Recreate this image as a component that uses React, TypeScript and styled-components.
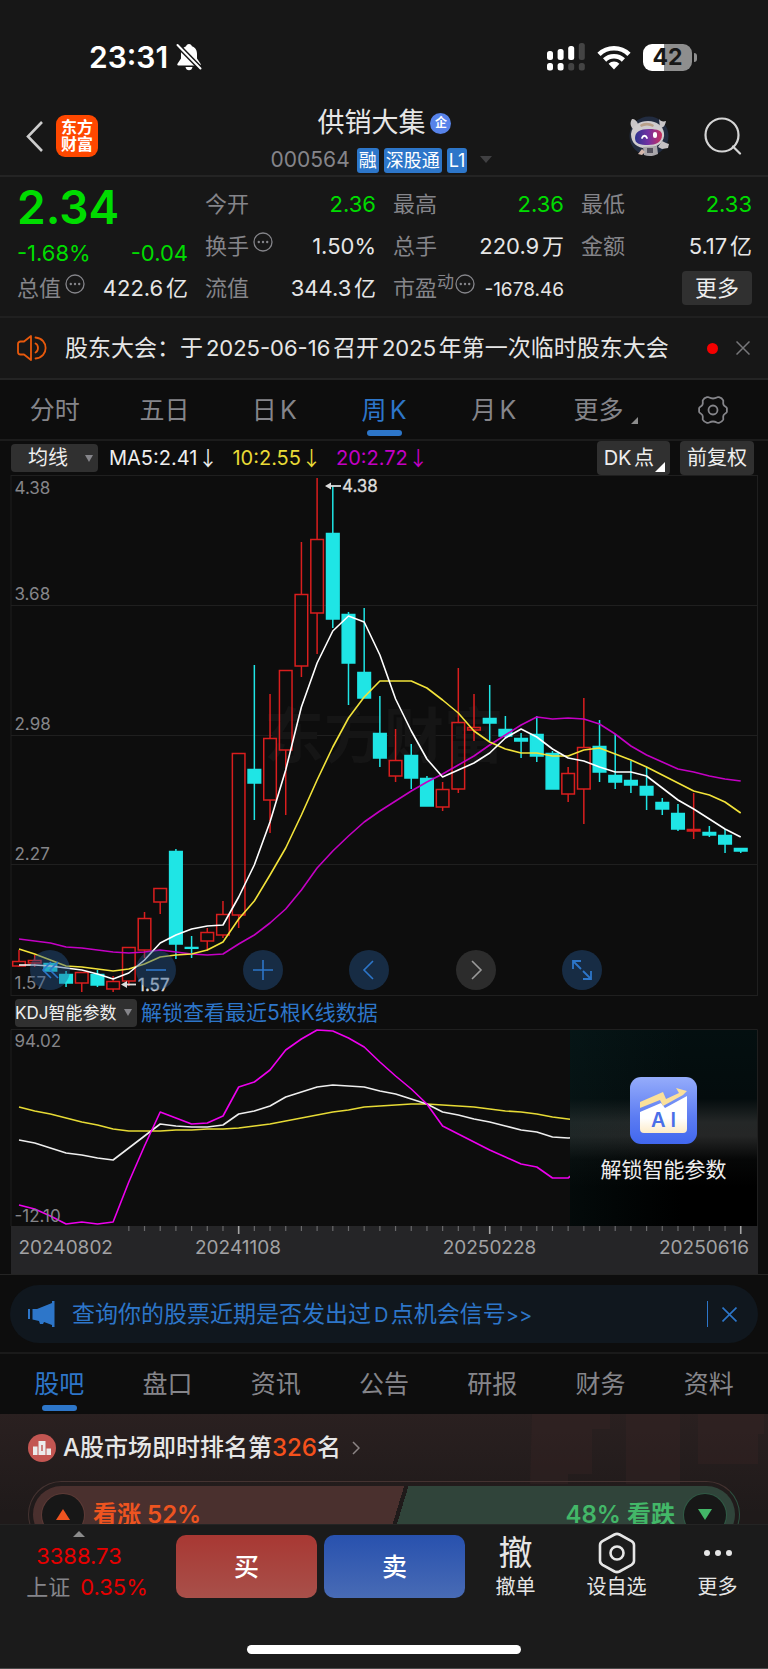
import React from "react";
import styled, { createGlobalStyle, css } from "styled-components";

const GlobalStyle = createGlobalStyle`
  * { box-sizing: border-box; }
  body { margin: 0; background: #0d0d0d; }
  body, button, select { font-family: Inter, "Noto Sans CJK SC", sans-serif; }
  button, select { appearance: none; border: 0; padding: 0; margin: 0; background: none; color: inherit; }
  button { cursor: pointer; }
  a { color: inherit; text-decoration: none; }
  svg { display: block; flex: none; }
`;

const BLUE = "#2d76c9";
const GREEN = "#00dc00";
const GREY = "#85858a";
const UP = "#d91e1e";
const DOWN = "#1fe5e5";
const MAGENTA = "#c400c4";
const YELLOW = "#f2e33a";

/* ---------- shell ---------- */

const Page = styled.div`
  width: 100%;
  overflow: hidden;
  color: #e6e6e6;
  text-autospace: normal;
`;

const StatusBar = styled.div`
  display: flex;
  align-items: center;
  justify-content: space-between;
  height: 95px;
  padding: 19px 71px 0 89px;
  background: #171717;
`;
const StatusGroup = styled.div<{ $gap: number }>`
  display: flex;
  align-items: center;
  gap: ${(p) => p.$gap}px;
`;
const Clock = styled.span`
  font-size: 30px;
  font-weight: 600;
  line-height: 32px;
  color: #fff;
`;

const Header = styled.header`
  display: grid;
  grid-template-columns: 1fr auto 1fr;
  align-items: center;
  height: 82px;
  padding: 2px 25px 0 26px;
  background: #171717;
  border-bottom: 2px solid #242424;
`;
const HeaderSide = styled.div<{ $end?: boolean }>`
  display: flex;
  align-items: center;
  gap: ${(p) => (p.$end ? 34 : 13)}px;
  justify-content: ${(p) => (p.$end ? "flex-end" : "flex-start")};
`;
const IconButton = styled.button`
  display: flex;
  align-items: center;
  justify-content: center;
`;
const Logo = styled.div`
  display: grid;
  place-content: center;
  width: 42px;
  height: 42px;
  border-radius: 9px;
  background: #ff4800;
  color: #fff;
  font-size: 16px;
  font-weight: 700;
  line-height: 17px;
  text-align: center;
`;
const TitleBlock = styled.div`
  display: flex;
  flex-direction: column;
  align-items: center;
  gap: 7px;
  padding-top: 9px;
`;
const TitleRow = styled.div`
  display: flex;
  align-items: center;
  gap: 5px;
  height: 32px;
`;
const Title = styled.h1`
  margin: 0;
  font-size: 27px;
  font-weight: 400;
  line-height: 32px;
`;
const CompanyBadge = styled.span`
  display: grid;
  place-content: center;
  width: 21px;
  height: 21px;
  border-radius: 50%;
  background: #5783ea;
  color: #fff;
  font-size: 12px;
  font-weight: 700;
  line-height: 14px;
`;
const CodeRow = styled.div`
  display: flex;
  align-items: center;
  gap: 5px;
  height: 28px;
`;
const Code = styled.span`
  margin-right: 2px;
  color: ${GREY};
  font-size: 21px;
  line-height: 24px;
`;
const Tag = styled.span`
  padding: 0 2px;
  border-radius: 3px;
  background: ${BLUE};
  color: #fff;
  font-size: 18px;
  line-height: 25px;
`;

/* ---------- quote ---------- */

const Quote = styled.section`
  display: grid;
  grid-template-columns: repeat(4, 1fr);
  column-gap: 17px;
  padding: 6px 16px 7px 17px;
  background: #171717;
  border-bottom: 2px solid #202020;
`;
const QuoteColumn = styled.div`
  display: flex;
  flex-direction: column;
`;
const QuoteRow = styled.div`
  display: flex;
  align-items: center;
  justify-content: space-between;
  height: 42px;
`;
const PriceRow = styled(QuoteRow)`
  height: 48px;
`;
const ChangeRow = styled(QuoteRow)`
  height: 36px;
  padding-top: 8px;
`;
const Price = styled.span`
  color: ${GREEN};
  font-size: 46px;
  font-weight: 600;
  line-height: 48px;
`;
const QuoteLabel = styled.span<{ $gap?: number }>`
  display: flex;
  align-items: center;
  gap: ${(p) => p.$gap ?? 4}px;
  color: ${GREY};
  font-size: 22px;
  line-height: 28px;
  white-space: nowrap;
`;
const Raised = styled.span`
  display: flex;
  align-items: center;
  gap: 1px;
  padding-bottom: 8px;
`;
const Superscript = styled.span`
  padding-bottom: 4px;
  font-size: 17px;
  line-height: 20px;
`;
const Value = styled.span<{ $green?: boolean }>`
  color: ${(p) => (p.$green ? GREEN : "#e6e6e6")};
  font-size: 22px;
  line-height: 28px;
  white-space: nowrap;
`;
const SmallValue = styled(Value)`
  padding-top: 4px;
  font-size: 19px;
`;
const MoreButton = styled.button`
  margin-left: auto;
  padding: 0 13px;
  border-radius: 4px;
  background: #303030;
  color: #eee;
  font-size: 22px;
  line-height: 34px;
`;

const Notice = styled.section`
  display: flex;
  align-items: center;
  height: 62px;
  padding: 0 18px 0 17px;
  background: #171717;
  border-bottom: 2px solid #242424;
`;
const NoticeText = styled.a`
  flex: 1;
  margin-left: 18px;
  font-size: 23px;
  line-height: 30px;
  white-space: nowrap;
`;
const Latin = styled.span<{ $size: number }>`
  font-size: ${(p) => p.$size}px;
`;
const RedDot = styled.span`
  width: 11px;
  height: 11px;
  margin-right: 18px;
  border-radius: 50%;
  background: #f50000;
`;

/* ---------- tabs ---------- */

const Tabs = styled.nav`
  display: flex;
  height: 61px;
  border-bottom: 2px solid #1c1c1c;
`;
const SectionTabs = styled(Tabs)`
  height: 60px;
  padding: 0 5px;
  border-bottom: 0;
`;
const Tab = styled.button<{ $active?: boolean }>`
  position: relative;
  display: flex;
  flex: 1;
  align-items: center;
  justify-content: center;
  gap: 8px;
  color: ${(p) => (p.$active ? BLUE : GREY)};
  font-size: 25px;
  line-height: 30px;
  text-autospace: normal;
  ${(p) =>
    p.$active &&
    css`
      &::after {
        content: "";
        position: absolute;
        bottom: 3px;
        left: 50%;
        width: 35px;
        height: 6px;
        margin-left: -17px;
        border-radius: 3px;
        background: ${BLUE};
      }
    `}
`;
const Corner = styled.span<{ $size: number; $color: string }>`
  align-self: flex-end;
  border-left: ${(p) => p.$size}px solid transparent;
  border-bottom: ${(p) => p.$size}px solid ${(p) => p.$color};
`;
const TabCorner = styled(Corner)`
  margin: 0 -5px 15px 0;
`;

/* ---------- indicator rows ---------- */

const IndicatorBar = styled.div`
  display: flex;
  align-items: center;
  height: 34px;
  padding: 0 14px 0 11px;
`;
const SelectBox = styled.label<{ $width: number }>`
  display: flex;
  align-items: center;
  width: ${(p) => p.$width}px;
  height: 28px;
  padding-right: 5px;
  border-radius: 4px;
  background: #303030;
`;
const Select = styled.select<{ $size: number; $align: string }>`
  flex: 1;
  min-width: 0;
  height: 28px;
  color: #eee;
  font-size: ${(p) => p.$size}px;
  text-align: ${(p) => p.$align};
  text-align-last: ${(p) => p.$align};
  outline: none;
`;
const Caret = styled.span`
  border: 4px solid transparent;
  border-top: 7px solid ${GREY};
  border-bottom: 0;
`;
const Average = styled.span<{ $color: string }>`
  display: flex;
  align-items: center;
  gap: 6px;
  margin-right: 20px;
  color: ${(p) => p.$color};
  font-size: 20px;
  line-height: 26px;
  white-space: nowrap;
  ${SelectBox} + & {
    margin-left: 11px;
  }
`;
const Arrow = styled.span`
  display: flex;
  justify-content: center;
  width: 9px;
  font-family: "Noto Sans CJK SC", sans-serif;
`;
const ChartButton = styled.button`
  display: flex;
  align-items: center;
  justify-content: center;
  height: 34px;
  margin-left: 10px;
  padding: 0 7px;
  border-radius: 4px;
  background: #303030;
  color: #eee;
  font-size: 20px;
  line-height: 34px;
  text-autospace: normal;
`;
const ButtonCorner = styled(Corner)`
  margin: 0 -2px 3px 1px;
`;
const Spacer = styled.span`
  flex: 1;
`;

const KdjBar = styled.div`
  display: flex;
  align-items: center;
  gap: 4px;
  height: 33px;
  padding: 0 15px;
`;
const UnlockLink = styled.a`
  color: ${BLUE};
  font-size: 21px;
  line-height: 28px;
  text-autospace: no-autospace;
`;

/* ---------- charts ---------- */

const ChartBox = styled.div`
  position: relative;
  margin: 0 10px;
`;
const Chart = styled.svg`
  width: 100%;
  height: auto;
  font-family: Inter, "Noto Sans CJK SC", sans-serif;
`;
const ChartControls = styled.div`
  position: absolute;
  bottom: 6px;
  left: 20px;
  display: flex;
  justify-content: space-between;
  width: 76.5%;
`;
const RoundButton = styled.button<{ $muted?: boolean }>`
  display: grid;
  place-content: center;
  width: 40px;
  height: 40px;
  border-radius: 50%;
  background: ${(p) => (p.$muted ? "rgba(255,255,255,.13)" : "rgba(38,88,146,.42)")};
`;
const LockPanel = styled.a`
  position: absolute;
  top: 1px;
  right: 1px;
  bottom: 0;
  display: flex;
  flex-direction: column;
  align-items: center;
  width: 25%;
  padding-top: 47px;
  gap: 11px;
  color: #eee;
  font-size: 21px;
  line-height: 30px;
  background:
    linear-gradient(90deg, rgba(13, 40, 40, .25), rgba(0, 0, 0, 0) 60%),
    linear-gradient(#040f10, #040c0d 35%, #242727 47%, #252626 54%, #060707 66%, #000 80%);
`;

/* ---------- banner ---------- */

const BannerWrap = styled.section`
  padding: 10px 10px 9px;
  border-top: 1px solid #242424;
  border-bottom: 2px solid #1a1a1a;
`;
const Banner = styled.div`
  display: flex;
  align-items: center;
  height: 58px;
  padding: 0 21px 0 18px;
  border-radius: 29px;
  background: #10171e;
  color: ${BLUE};
`;
const BannerText = styled.a`
  flex: 1;
  margin-left: 17px;
  font-size: 23px;
  line-height: 30px;
`;
const Divider = styled.span`
  width: 1px;
  height: 26px;
  margin-right: 14px;
  background: ${BLUE};
`;

/* ---------- rank card ---------- */

const RankCard = styled.section`
  position: relative;
  height: 110px;
  padding: 14px 28px 0;
  overflow: hidden;
  background: linear-gradient(#2a2020, #1f1a1a 90%);
`;
const RankArt = styled.svg`
  position: absolute;
  top: 0;
  right: 0;
`;
const RankLine = styled.a`
  position: relative;
  display: flex;
  align-items: center;
  height: 40px;
  font-size: 24px;
  font-weight: 500;
  line-height: 32px;
`;
const RankText = styled.span`
  margin: 0 11px 0 7px;
  text-autospace: no-autospace;
`;
const Orange = styled.span`
  color: #f4511c;
`;
const Poll = styled.div`
  position: relative;
  margin-top: 13px;
  height: 67px;
  padding: 4px;
  border: 1px solid #453331;
  border-right-color: #2d5241;
  border-radius: 34px;
`;
const PollBar = styled.div`
  display: flex;
  justify-content: space-between;
  height: 57px;
  border-radius: 29px;
  overflow: hidden;
  background: linear-gradient(107deg, #4a302e 51.6%, #1f1a1a 51.6%, #1f1a1a 52.2%, #30443a 52.2%);
`;
const PollSide = styled.button<{ $color: string }>`
  display: flex;
  align-items: center;
  gap: 9px;
  padding: 0 9px;
  color: ${(p) => p.$color};
  font-size: 24px;
  font-weight: 600;
  line-height: 30px;
`;
const PollDisc = styled.span<{ $ring: string }>`
  display: grid;
  place-content: center;
  width: 42px;
  height: 42px;
  border-radius: 50%;
  background: #171717;
  box-shadow: 0 0 0 1px ${(p) => p.$ring};
`;

/* ---------- bottom bar ---------- */

const BottomBar = styled.footer`
  background: #1b1b1b;
  border-top: 1px solid #242424;
  border-bottom: 1px solid #4a4a4a;
`;
const Actions = styled.div`
  display: flex;
  align-items: flex-start;
  height: 120px;
  padding-top: 10px;
`;
const IndexBox = styled.a`
  display: flex;
  flex-direction: column;
  align-items: center;
  width: 158px;
  margin: -4px 10px 0 8px;
  color: #e60000;
  font-size: 22px;
  line-height: 31px;
`;
const IndexPrice = styled.span`
  display: flex;
  flex-direction: column;
  align-items: center;
  margin-right: 16px;
`;
const IndexRow = styled.span`
  display: flex;
  gap: 10px;
`;
const Muted = styled.span`
  color: ${GREY};
`;
const UpCaret = styled.span`
  margin-bottom: 4px;
  border: 6px solid transparent;
  border-bottom: 6px solid #8c8c8c;
  border-top: 0;
`;
const TradeButton = styled.button<{ $from: string; $to: string }>`
  flex: 1;
  height: 63px;
  border-radius: 10px;
  background: linear-gradient(${(p) => p.$from}, ${(p) => p.$to});
  color: #fff;
  font-size: 25px;
  font-weight: 500;
  line-height: 32px;
  & + & {
    margin-left: 7px;
  }
`;
const ToolButton = styled.button`
  display: flex;
  flex-direction: column;
  align-items: center;
  width: 101px;
  font-size: 20px;
  line-height: 28px;
  color: #e6e6e6;
`;
const ToolGlyph = styled.span`
  display: flex;
  align-items: center;
  height: 36px;
  margin-bottom: 2px;
  font-size: 34px;
  line-height: 36px;
`;
const HomeIndicator = styled.div`
  width: 274px;
  height: 9px;
  margin: 0 auto 14px;
  border-radius: 5px;
  background: #fff;
`;

/* ---------- data ---------- */

/* Horizontal position of the week at an index. */
const weekX = (i: number) => 19 + i * 15.69;

/* [rising, body top, body bottom, high, low] */
type Candle = [boolean, number, number, number, number];
const candles: Candle[] = [
  [true, 961, 966, 950, 967], [true, 960, 963, 955, 967], [false, 963, 971, 963, 972],
  [false, 974, 983, 971, 987], [true, 972, 983, 972, 992], [false, 974, 985, 970, 987],
  [true, 981, 989, 976, 992], [true, 947, 981, 947, 986], [true, 918, 950, 912, 958],
  [true, 888, 902, 888, 914], [false, 851, 944, 849, 959], [false, 947, 948, 936, 958],
  [true, 932, 941, 928, 951], [true, 914, 935, 901, 938], [true, 753, 915, 753, 928],
  [false, 769, 783, 665, 820], [true, 738, 800, 694, 833], [true, 670, 750, 670, 815],
  [true, 594, 666, 542, 677], [true, 539, 613, 478, 654], [false, 533, 619, 486, 628],
  [false, 614, 663, 612, 705], [false, 672, 698, 608, 698], [false, 733, 758, 696, 767],
  [true, 760, 776, 729, 782], [false, 755, 778, 744, 789], [false, 778, 806, 776, 806],
  [true, 789, 807, 782, 811], [true, 722, 789, 668, 793], [true, 727, 730, 694, 741],
  [false, 718, 723, 685, 741], [false, 729, 736, 716, 738], [false, 738, 741, 733, 758],
  [false, 734, 756, 716, 762], [false, 753, 789, 751, 789], [true, 773, 794, 767, 802],
  [true, 747, 789, 698, 824], [false, 746, 772, 720, 782], [false, 775, 782, 734, 789],
  [false, 780, 785, 761, 793], [false, 786, 795, 767, 810], [false, 802, 809, 798, 815],
  [false, 813, 829, 804, 831], [true, 829, 831, 793, 839], [false, 832, 835, 826, 837],
  [false, 835, 844, 829, 853], [false, 848, 851, 848, 853],
];

const ma5 = [965, 965, 966, 968, 970, 974, 979, 973, 960, 943, 935, 929, 926, 925, 897, 865, 822, 770, 707, 663, 631, 616, 622, 655, 699, 731, 759, 777, 770, 763, 753, 738, 729, 737, 749, 758, 761, 767, 772, 772, 776, 788, 800, 809, 819, 829, 837];
const ma10 = [949, 954, 960, 966, 967, 969, 971, 969, 964, 957, 955, 954, 950, 942, 919, 901, 875, 848, 815, 780, 747, 718, 697, 681, 681, 681, 688, 700, 713, 731, 742, 749, 753, 753, 756, 756, 750, 748, 754, 760, 767, 775, 783, 791, 795, 802, 813];
const ma20 = [939, 941, 943, 947, 948, 950, 952, 953, 952, 950, 952, 954, 955, 954, 944, 935, 923, 909, 890, 868, 851, 836, 822, 811, 801, 791, 782, 774, 765, 756, 745, 735, 725, 717, 719, 718, 719, 724, 734, 746, 755, 762, 769, 772, 776, 779, 781];

const kLine = [1140, 1143, 1148, 1153, 1155, 1158, 1160, 1148, 1136, 1124, 1126, 1127, 1127, 1125, 1114, 1111, 1106, 1097, 1092, 1087, 1085, 1086, 1087, 1091, 1094, 1099, 1104, 1112, 1115, 1119, 1122, 1126, 1130, 1132, 1137, 1138, 1137];
const dLine = [1107, 1111, 1114, 1118, 1122, 1125, 1129, 1131, 1131, 1131, 1130, 1130, 1129, 1129, 1128, 1126, 1124, 1121, 1118, 1115, 1112, 1110, 1107, 1106, 1105, 1104, 1104, 1105, 1106, 1107, 1109, 1111, 1112, 1114, 1117, 1119, 1121];
const jLine = [1205, 1209, 1216, 1224, 1222, 1224, 1222, 1182, 1146, 1112, 1118, 1124, 1123, 1116, 1087, 1082, 1070, 1050, 1039, 1030, 1031, 1038, 1047, 1062, 1076, 1089, 1104, 1126, 1134, 1142, 1150, 1157, 1164, 1167, 1178, 1178, 1166];

const toPoints = (ys: number[]) => ys.map((y, i) => `${weekX(i).toFixed(1)},${y}`).join(" ");

/* ---------- icons ---------- */

const BellOff = () => (
  <svg width="26" height="28" viewBox="0 0 26 28">
    <path d="M13 1c1.600 0 2.700 1 2.900 2.300C19.500 4.600 21 7.600 21 11v4.500l3.500 5.300c.5.900.2 1.700-.8 1.700H2.300c-1 0-1.300-.8-.8-1.700L5 15.500V11c0-3.400 1.500-6.400 5.100-7.700C10.300 2 11.400 1 13 1z" fill="#fff" />
    <path d="M9.500 24h7c-.3 2-1.700 3.300-3.500 3.300S9.800 26 9.500 24z" fill="#fff" />
    <path d="M2 2.500 25 26" stroke="#171717" strokeWidth="5" />
    <path d="M1.500 2 24.500 25.500" stroke="#fff" strokeWidth="2" strokeLinecap="round" />
  </svg>
);

const Signal = () => (
  <svg width="38" height="28" viewBox="0 0 38 28">
    {[0, 1, 2, 3].map((i) => {
      const top = [8, 6, 3, 0][i];
      return (
        <g key={i}>
          <rect x={i * 10.6} y={top} width="6" height={17 - top} rx="2.500" fill={i < 3 ? "#fff" : "#444"} />
          <rect x={i * 10.6} y="20" width="6" height="7.500" rx="2.500" fill={i < 2 ? "#fff" : "#444"} />
        </g>
      );
    })}
  </svg>
);

const Wifi = () => (
  <svg width="34" height="25" viewBox="0 0 34 25">
    <g fill="none" stroke="#fff" strokeWidth="4.600">
      <path d="M2 9.300a21.500 21.500 0 0 1 30 0" />
      <path d="M7.600 15a13.500 13.500 0 0 1 18.800 0" />
    </g>
    <path d="M17 24.500l-5.400-5.700a7.600 7.600 0 0 1 10.800 0z" fill="#fff" />
  </svg>
);

const BatteryBox = styled.span`
  position: relative;
  display: grid;
  place-content: center;
  width: 49px;
  height: 27px;
  margin-right: 5px;
  border-radius: 9px;
  background: linear-gradient(90deg, #fff 43%, #8e8e8e 43%);
  color: #171717;
  font-size: 23px;
  font-weight: 700;
  line-height: 27px;
  &::after {
    content: "";
    position: absolute;
    top: 9px;
    right: -5px;
    width: 3px;
    height: 9px;
    border-radius: 0 3px 3px 0;
    background: #8e8e8e;
  }
`;

const Robot = () => (
  <svg width="41" height="41" viewBox="0 0 41 41">
    <circle cx="20" cy="20" r="19.500" fill="#222c40" />
    <path d="M3 3c3 0 5 2 6 5l-5 5C1 10 1 6 3 3zM30 3c1 2 4 3 7 2-1 5-3 7-6 7z" fill="#c9c6c8" />
    <path d="M2 18C3 9 11 5 19 5c9 0 15 5 16 12 1 8-5 14-15 15C9 33 2 28 2 18z" fill="#cfccce" />
    <path d="M11 9c4-3 9-3 14 0l-1 2c-4-2-8-2-12 0z" fill="#b9a18a" />
    <path d="M6 22c0-6 5-9 14-9s13 2 13 6c0 7-6 10-14 10S6 28 6 22z" fill="url(#visor)" />
    <path d="M13 22c1-3 4-3 5 0" stroke="#fff" strokeWidth="1.800" fill="none" strokeLinecap="round" />
    <rect x="24" y="16" width="4" height="6" rx="2" fill="#fff" />
    <path d="M14 31l14-1 1 8c-4 2-9 3-14 1z" fill="#a9a6aa" />
    <path d="M18 32h6v5h-6z" fill="#55525e" />
    <path d="M33 25l4 2 3 1-1 4-6 1-4-2z" fill="#c5c1c3" />
    <path d="M13 33l-4 5 4 1 3-3z" fill="#d5b7ab" />
    <defs>
      <linearGradient id="visor" x1="0" x2="1">
        <stop offset="0" stopColor="#2d3590" />
        <stop offset=".5" stopColor="#7330a2" />
        <stop offset="1" stopColor="#c8305c" />
      </linearGradient>
    </defs>
  </svg>
);

const MoreDots = () => (
  <svg width="20" height="20" viewBox="0 0 20 20">
    <circle cx="10" cy="10" r="9" fill="none" stroke={GREY} strokeWidth="1.300" />
    {[5.8, 10, 14.200].map((x) => <circle key={x} cx={x} cy="10" r="1.200" fill={GREY} />)}
  </svg>
);

const Speaker = () => (
  <svg width="30" height="26" viewBox="0 0 30 26" fill="none" stroke="#e8590c" strokeWidth="1.800" strokeLinejoin="round" strokeLinecap="round">
    <path d="M14 1v24L7 19.500H3.500A2.500 2.500 0 0 1 1 17V9a2.500 2.500 0 0 1 2.500-2.500H7z" />
    <path d="M18.500 8.500c3.300 1.500 3.300 7.500 0 9" />
    <path d="M18.500 2.500c13.500 1 13.500 20 0 21" />
  </svg>
);

const Cross = ({ size, color }: { size: number; color: string }) => (
  <svg width={size} height={size} viewBox="0 0 14 14" stroke={color} strokeWidth="1.500">
    <path d="M.5.5l13 13M13.500.5l-13 13" />
  </svg>
);

const Gear = () => (
  <svg width="30" height="28" viewBox="0 0 30 28" fill="none" stroke={GREY} strokeWidth="1.800" strokeLinejoin="round">
    <path d="M9 1.200h1.200c1 0 1.600 1.300 4.800 1.300s3.800-1.300 4.800-1.300H21c1.300.3 3.600 2 4.200 3.200.4 1-.6 2.300.4 4.400s3 2 3.300 3.300v3.800c-.3 1.300-2.300 1.200-3.300 3.300s0 3.400-.4 4.400c-.6 1.200-2.900 2.900-4.200 3.200h-1.200c-1 0-1.600-1.300-4.800-1.300s-3.800 1.300-4.800 1.300H9c-1.300-.3-3.600-2-4.200-3.200-.4-1 .6-2.300-.4-4.400s-3-2-3.300-3.300v-3.800c.3-1.300 2.300-1.200 3.300-3.300s0-3.400.4-4.400C5.400 3.200 7.700 1.500 9 1.200z" />
    <circle cx="15" cy="14" r="4.500" />
  </svg>
);

const Megaphone = () => (
  <svg width="27" height="26" viewBox="0 0 27 26" fill={BLUE}>
    <path d="M0 8h2v10H0zM4.500 8H9L24 2V0h2.500v26H24v-2l-8-3-1 2h-3l-1-3-6.500-1.500z" />
  </svg>
);

const GrowthLogo = () => (
  <svg width="67" height="67" viewBox="0 0 67 67">
    <defs>
      <linearGradient id="tile" x1="0" y1="0" x2="0" y2="1">
        <stop offset="0" stopColor="#95acfb" />
        <stop offset=".6" stopColor="#5c7cf2" />
        <stop offset="1" stopColor="#4167ef" />
      </linearGradient>
      <linearGradient id="sheet" x1="0" y1="0" x2="0" y2="1">
        <stop offset=".6" stopColor="#fff" />
        <stop offset="1" stopColor="#fdebc8" />
      </linearGradient>
    </defs>
    <rect width="67" height="67" rx="11" fill="url(#tile)" />
    <path d="M10 35l21-9 4 5 22-12v33a4 4 0 0 1-4 4H14a4 4 0 0 1-4-4z" fill="url(#sheet)" />
    <path d="M10 25l23-10 3 7 13-6-3-5 11 3-4 4-20 11-3-6-20 8z" fill="#fbe09a" />
    <text x="33.500" y="50" textAnchor="middle" fontFamily="Inter, sans-serif" fontSize="20" fontWeight="600" fill="#4a6fe8">A I</text>
  </svg>
);

const stroke = { fill: "none", stroke: BLUE, strokeWidth: 1.6 } as const;
const controls = [
  { label: "最早", icon: <g {...stroke}><path d="M11 2 3 10l8 8M18 2l-8 8 8 8" /></g> },
  { label: "缩小", icon: <path {...stroke} d="M0 10h20" /> },
  { label: "放大", icon: <path {...stroke} d="M0 10h20M10 0v20" /> },
  { label: "向左", icon: <path {...stroke} d="M14 1 5 10l9 9" /> },
  { label: "向右", muted: true, icon: <path {...stroke} stroke="#9a9a9a" d="M6 1l9 9-9 9" /> },
  { label: "全屏", icon: <path {...stroke} strokeWidth={1.8} d="M9 1H1v8M1 1l8 8M11 19h8v-8M19 19l-8-8" /> },
];

/* ---------- charts ---------- */

const axisText = { fill: "#858589", fontSize: 17 } as const;

const PriceChart = () => (
  <ChartBox>
    <Chart viewBox="10 475 748 521" role="img" aria-label="周K线图">
      <g stroke="#1f1f1f" fill="none">
        <rect x="11" y="475.500" width="746.500" height="520" />
        <path d="M11 605.500H757M11 735.500H757M11 864.500H757" />
      </g>
      <text x="384" y="758" textAnchor="middle" fontSize="60" fontWeight="700" fill="#151515">东方财富</text>
      {candles.map(([rising, top, bottom, high, low], i) => {
        const x = weekX(i);
        const color = rising ? UP : DOWN;
        return (
          <g key={i} stroke={color} strokeWidth="1.500">
            <path d={`M${x} ${high}V${top}M${x} ${bottom}V${low}`} />
            <rect x={x - 6.3} y={top + 0.5} width="12.600" height={Math.max(bottom - top - 0.5, 0.8)} fill={rising ? "none" : color} />
          </g>
        );
      })}
      <g fill="none" strokeWidth="1.600" strokeLinejoin="round">
        <polyline points={toPoints(ma20)} stroke={MAGENTA} />
        <polyline points={toPoints(ma10)} stroke={YELLOW} />
        <polyline points={toPoints(ma5)} stroke="#fff" />
      </g>
      <g {...axisText}>
        <text x="14.500" y="494">4.38</text>
        <text x="14.500" y="599.500">3.68</text>
        <text x="14.500" y="729.500">2.98</text>
        <text x="14.500" y="859.500">2.27</text>
        <text x="14.500" y="989">1.57</text>
      </g>
      <g fill="#ddd" stroke="#ddd" fontSize="17">
        <path d="M328 486h13" strokeWidth="1.800" />
        <path d="M325 486l6-3.500v7z" stroke="none" />
        <text x="342" y="492" strokeWidth=".3">4.38</text>
        <path d="M124 984.500h12" strokeWidth="1.800" />
        <path d="M121 984.500l6-3.500v7z" stroke="none" />
        <text x="138" y="990.500" strokeWidth=".3">1.57</text>
      </g>
    </Chart>
    <ChartControls>
      {controls.map((c) => (
        <RoundButton key={c.label} $muted={c.muted} aria-label={c.label}>
          <svg width="20" height="20" viewBox="0 0 20 20">{c.icon}</svg>
        </RoundButton>
      ))}
    </ChartControls>
  </ChartBox>
);

const KdjChart = () => (
  <ChartBox>
    <Chart viewBox="10 1029 748 197" role="img" aria-label="KDJ指标图">
      <path d="M11 1226V1029.500H757.500V1226" stroke="#1f1f1f" fill="none" />
      <g fill="none" strokeWidth="1.600" strokeLinejoin="round">
        <polyline points={toPoints(dLine)} stroke="#e6da35" />
        <polyline points={toPoints(kLine)} stroke="#eee" />
        <polyline points={toPoints(jLine)} stroke="#ee00ee" />
      </g>
      <g {...axisText}>
        <text x="14.500" y="1046.500">94.02</text>
        <text x="14.500" y="1222">-12.10</text>
      </g>
    </Chart>
    <LockPanel href="#unlock">
      <GrowthLogo />
      解锁智能参数
    </LockPanel>
  </ChartBox>
);

const DateAxis = () => (
  <ChartBox>
    <Chart viewBox="10 1226 748 48" role="img" aria-label="日期轴">
      <rect x="11" y="1226" width="747" height="48" fill="#252527" />
      {Array.from({ length: 40 }, (_, k) => k + 7).map((i) => {
        const major = i === 14 || i === 30 || i === 46;
        return <path key={i} d={`M${weekX(i)} 1226v${major ? 8 : 5}`} stroke={major ? "#a5a5a5" : "#6a6a6c"} strokeWidth={major ? 1.6 : 1.2} />;
      })}
      <g fill="#a2a2a4" fontSize="19">
        <text x="18.500" y="1253.500">20240802</text>
        <text x="238" y="1253.500" textAnchor="middle">20241108</text>
        <text x="489.500" y="1253.500" textAnchor="middle">20250228</text>
        <text x="749" y="1253.500" textAnchor="end">20250616</text>
      </g>
    </Chart>
  </ChartBox>
);

/* ---------- page ---------- */

const QuoteCell = ({ label, value, green, dots }: { label: string; value: string; green?: boolean; dots?: boolean }) => (
  <QuoteRow>
    <QuoteLabel>
      {label}
      {dots && <Raised><MoreDots /></Raised>}
    </QuoteLabel>
    <Value $green={green}>{value}</Value>
  </QuoteRow>
);

export default function App() {
  return (
    <Page>
      <GlobalStyle />
      <StatusBar>
        <StatusGroup $gap={8}>
          <Clock>23:31</Clock>
          <BellOff />
        </StatusGroup>
        <StatusGroup $gap={12}>
          <Signal />
          <Wifi />
          <BatteryBox>42</BatteryBox>
        </StatusGroup>
      </StatusBar>

      <Header>
        <HeaderSide>
          <IconButton aria-label="返回">
            <svg width="17" height="31" viewBox="0 0 17 31" fill="none" stroke="#ccc" strokeWidth="2.600"><path d="M16 1 2 15.500 16 30" /></svg>
          </IconButton>
          <Logo>东方<br />财富</Logo>
        </HeaderSide>
        <TitleBlock>
          <TitleRow>
            <Title>供销大集</Title>
            <CompanyBadge>企</CompanyBadge>
          </TitleRow>
          <CodeRow>
            <Code>000564</Code>
            <Tag>融</Tag>
            <Tag>深股通</Tag>
            <Tag>L1</Tag>
            <svg width="26" height="8" viewBox="0 0 26 8"><path d="M8 0h12l-6 7z" fill="#404042" /></svg>
          </CodeRow>
        </TitleBlock>
        <HeaderSide $end>
          <IconButton aria-label="智能助手"><Robot /></IconButton>
          <IconButton aria-label="搜索">
            <svg width="39" height="38" viewBox="0 0 39 38" fill="none" stroke="#d5d5d5" strokeWidth="2.200" strokeLinecap="round">
              <circle cx="18" cy="18" r="16.500" />
              <path d="M29 29.500l7 7" />
            </svg>
          </IconButton>
        </HeaderSide>
      </Header>

      <Quote>
        <QuoteColumn>
          <PriceRow><Price>2.34</Price></PriceRow>
          <ChangeRow>
            <Value $green>-1.68%</Value>
            <Value $green>-0.04</Value>
          </ChangeRow>
          <QuoteCell label="总值" value="422.6亿" dots />
        </QuoteColumn>
        <QuoteColumn>
          <QuoteCell label="今开" value="2.36" green />
          <QuoteCell label="换手" value="1.50%" dots />
          <QuoteCell label="流值" value="344.3亿" />
        </QuoteColumn>
        <QuoteColumn>
          <QuoteCell label="最高" value="2.36" green />
          <QuoteCell label="总手" value="220.9万" />
          <QuoteRow>
            <QuoteLabel $gap={0}>
              市盈
              <Raised><Superscript>动</Superscript><MoreDots /></Raised>
            </QuoteLabel>
            <SmallValue>-1678.46</SmallValue>
          </QuoteRow>
        </QuoteColumn>
        <QuoteColumn>
          <QuoteCell label="最低" value="2.33" green />
          <QuoteCell label="金额" value="5.17亿" />
          <QuoteRow><MoreButton>更多</MoreButton></QuoteRow>
        </QuoteColumn>
      </Quote>

      <Notice>
        <Speaker />
        <NoticeText href="#notice">
          股东大会：于<Latin $size={22}>2025-06-16</Latin>召开<Latin $size={22}>2025</Latin>年第一次临时股东大会
        </NoticeText>
        <RedDot />
        <IconButton aria-label="关闭公告"><Cross size={14} color="#77777a" /></IconButton>
      </Notice>

      <Tabs>
        <Tab>分时</Tab>
        <Tab>五日</Tab>
        <Tab>日K</Tab>
        <Tab $active>周K</Tab>
        <Tab>月K</Tab>
        <Tab>更多<TabCorner $size={7} $color="#8c8c8c" /></Tab>
        <Tab aria-label="设置"><Gear /></Tab>
      </Tabs>

      <IndicatorBar>
        <SelectBox $width={87}>
          <Select $size={20} $align="center" aria-label="主图指标" defaultValue="均线">
            <option>均线</option>
          </Select>
          <Caret />
        </SelectBox>
        <Average $color="#eee">MA5:2.41<Arrow>↓</Arrow></Average>
        <Average $color="#e8da36">10:2.55<Arrow>↓</Arrow></Average>
        <Average $color={MAGENTA}>20:2.72<Arrow>↓</Arrow></Average>
        <Spacer />
        <ChartButton>DK点<ButtonCorner $size={10} $color="#fff" /></ChartButton>
        <ChartButton>前复权</ChartButton>
      </IndicatorBar>
      <PriceChart />

      <KdjBar>
        <SelectBox $width={122}>
          <Select $size={17} $align="left" aria-label="副图指标" defaultValue="KDJ智能参数">
            <option>KDJ智能参数</option>
          </Select>
          <Caret />
        </SelectBox>
        <UnlockLink href="#unlock">解锁查看最近5根K线数据</UnlockLink>
      </KdjBar>
      <KdjChart />
      <DateAxis />

      <BannerWrap>
        <Banner>
          <Megaphone />
          <BannerText href="#signal">
            查询你的股票近期是否发出过<Latin $size={20}>D</Latin>点机会信号<Latin $size={20}>&gt;&gt;</Latin>
          </BannerText>
          <Divider />
          <IconButton aria-label="关闭提示"><Cross size={15} color={BLUE} /></IconButton>
        </Banner>
      </BannerWrap>

      <SectionTabs>
        <Tab $active>股吧</Tab>
        <Tab>盘口</Tab>
        <Tab>资讯</Tab>
        <Tab>公告</Tab>
        <Tab>研报</Tab>
        <Tab>财务</Tab>
        <Tab>资料</Tab>
      </SectionTabs>

      <RankCard>
        <RankArt width="240" height="90" viewBox="0 0 240 90">
          <path d="M4 0h78v15H64v45H40v10H2zM98 0h54v70H98zM170 0h66v20h-6v30h-60z" fill="#3a2525" opacity=".35" />
        </RankArt>
        <RankLine href="#rank">
          <svg width="28" height="28" viewBox="0 0 28 28">
            <circle cx="14" cy="14" r="14" fill="#c35652" />
            <path d="M5 12.500h4.500v8.500H5zM10.500 7h7v14h-7zM18.500 14.500H23V21h-4.500z" fill="#ececec" />
            <path d="M14 11v6" stroke="#c35652" strokeWidth="1.400" />
          </svg>
          <RankText>A股市场即时排名第<Orange>326</Orange>名</RankText>
          <svg width="8" height="14" viewBox="0 0 8 14" fill="none" stroke="#8c8585" strokeWidth="1.500"><path d="M1 1l6 6-6 6" /></svg>
        </RankLine>
        <Poll>
          <PollBar>
            <PollSide $color="#ee5420">
              <PollDisc $ring="#5c3a36"><svg width="14" height="11" viewBox="0 0 14 11"><path d="M7 0l7 11H0z" fill="#ee5420" /></svg></PollDisc>
              看涨 52%
            </PollSide>
            <PollSide $color="#43b768">
              48% 看跌
              <PollDisc $ring="#2f5a45"><svg width="14" height="11" viewBox="0 0 14 11"><path d="M7 11l7-11H0z" fill="#43b768" /></svg></PollDisc>
            </PollSide>
          </PollBar>
        </Poll>
      </RankCard>

      <BottomBar>
        <Actions>
          <IndexBox href="#index">
            <IndexPrice><UpCaret />3388.73</IndexPrice>
            <IndexRow><Muted>上证</Muted>0.35%</IndexRow>
          </IndexBox>
          <TradeButton $from="#a83833" $to="#a8504a">买</TradeButton>
          <TradeButton $from="#2851ae" $to="#486bb5">卖</TradeButton>
          <ToolButton><ToolGlyph>撤</ToolGlyph>撤单</ToolButton>
          <ToolButton>
            <ToolGlyph>
              <svg width="38" height="42" viewBox="0 0 38 42" fill="none" stroke="#e6e6e6" strokeWidth="2.600" strokeLinejoin="round">
                <path d="M16.500 2.500q2.500-1.300 5 0l12 6.700q2.500 1.500 2.500 4v15.600q0 2.500-2.500 4l-12 6.700q-2.500 1.300-5 0l-12-6.700q-2.500-1.500-2.500-4V13.200q0-2.500 2.500-4z" />
                <circle cx="19" cy="21" r="6.500" />
              </svg>
            </ToolGlyph>
            设自选
          </ToolButton>
          <ToolButton>
            <ToolGlyph>
              <svg width="30" height="8" viewBox="0 0 30 8" fill="#e6e6e6"><circle cx="4" cy="4" r="3" /><circle cx="15" cy="4" r="3" /><circle cx="26" cy="4" r="3" /></svg>
            </ToolGlyph>
            更多
          </ToolButton>
        </Actions>
        <HomeIndicator />
      </BottomBar>
    </Page>
  );
}
